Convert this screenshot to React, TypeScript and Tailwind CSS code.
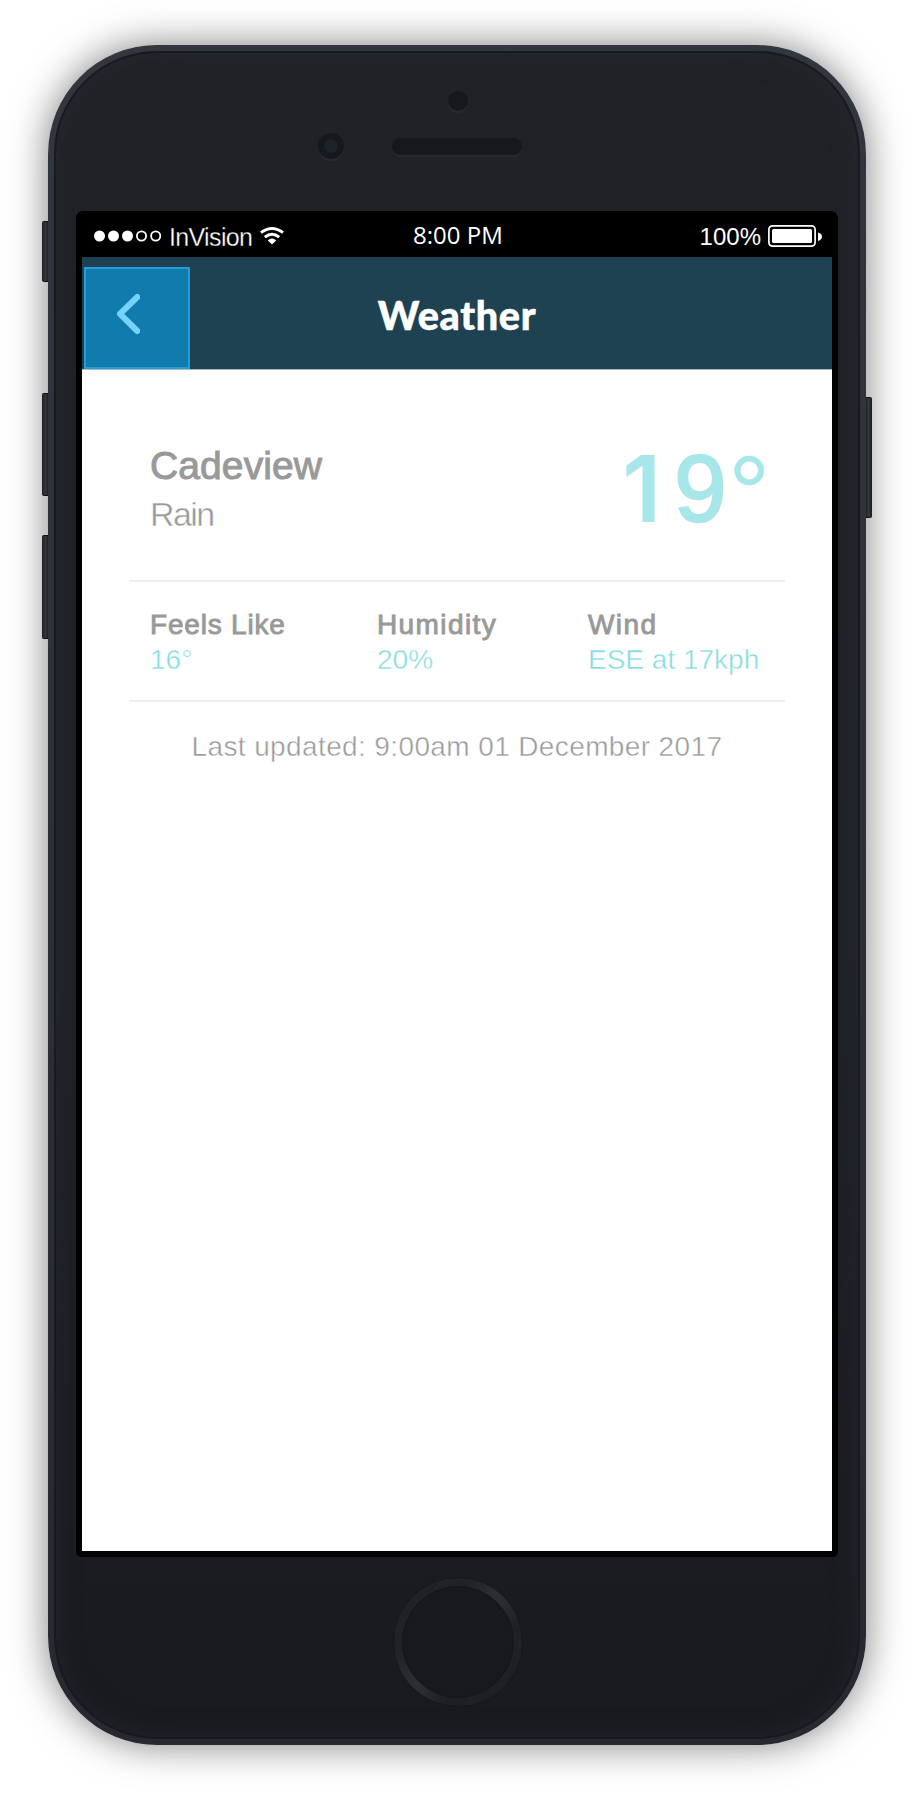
import React from "react";

const thin = "[-webkit-text-stroke:0.45px_#fff]";

function SideButton({ className }: { className: string }) {
  return (
    <div
      className={`absolute w-[7px] border-y border-[#17191d] bg-linear-to-r from-[#25272c] via-[#44474d] to-[#202227] ${className}`}
    />
  );
}

function SignalDots() {
  return (
    <svg width="68" height="12" viewBox="0 0 68 12" className="shrink-0">
      {[5.5, 19.5, 33.5].map((x) => (
        <circle key={x} cx={x} cy="6" r="5.5" fill="#fff" />
      ))}
      {[47.5, 61.7].map((x) => (
        <circle key={x} cx={x} cy="6" r="4.6" fill="none" stroke="#fff" strokeWidth="1.8" />
      ))}
    </svg>
  );
}

function Wifi() {
  return (
    <svg width="24" height="18" viewBox="0 0 24 18" className="shrink-0" fill="none" stroke="#fff" strokeWidth="2.8">
      <path d="M0.9 5.7 Q12 -2.8 23.1 5.7" />
      <path d="M4.8 10.2 Q12 4.2 19.2 10.2" />
      <path d="M7.8 13.4 Q12 9.8 16.2 13.4 L12 17.5Z" fill="#fff" stroke="none" />
    </svg>
  );
}

function Battery() {
  return (
    <svg width="54" height="22" viewBox="0 0 54 22" className="shrink-0">
      <rect x="0.9" y="0.9" width="46.2" height="20.2" rx="3.5" fill="none" stroke="#fff" strokeWidth="1.7" />
      <rect x="4" y="4" width="40" height="14" rx="1.5" fill="#fff" />
      <path d="M50 7.5 Q54 8.5 54 11.5 Q54 14.8 50 16Z" fill="#fff" />
    </svg>
  );
}

function StatusBar() {
  return (
    <div className="flex h-[46px] items-start bg-black text-white">
      <div className="flex w-[330px] items-start pl-[12px] pt-[19px]">
        <SignalDots />
        <span className="-mt-[7px] ml-[7px] text-[25px] leading-[28px] whitespace-nowrap tracking-[-0.65px] [-webkit-text-stroke:0.3px_#000]">
          InVision
        </span>
        <div className="-mt-[3px] ml-[8px]">
          <Wifi />
        </div>
      </div>
      <span className="w-[240px] pt-[10px] pl-px font-['Open_Sans',sans-serif] text-[24px] leading-[28px] font-medium whitespace-nowrap">
        8:00 PM
      </span>
      <div className="flex flex-1 items-start justify-end pr-[10px] pt-[14px]">
        <span className="-mt-[2px] mr-[7px] text-[24px] leading-[28px] whitespace-nowrap">100%</span>
        <Battery />
      </div>
    </div>
  );
}

function Header() {
  return (
    <div className="grid h-[113px] grid-cols-[1fr_auto_1fr] border-b border-[#a9b8c2] bg-[#1f4252] pl-[2px]">
      <button className="mt-[10px] flex h-[102px] w-[106px] border-2 border-[#269dd6] bg-[#107cae]" aria-label="Back">
        <svg width="24" height="42" viewBox="0 0 24 42" fill="none" className="mt-[24px] ml-[30px]">
          <path d="M21.3 4 L4 20.8 L21.3 38" stroke="#78d2ff" strokeWidth="6" strokeLinecap="round" strokeLinejoin="round" />
        </svg>
      </button>
      <h1 className="pt-[34px] pr-[2px] font-['Lato',sans-serif] text-[39.5px] leading-[48px] font-black tracking-[0.7px] text-white [-webkit-text-stroke:0.5px_#fff]">
        Weather
      </h1>
      <div />
    </div>
  );
}

function Stat({ label, value, className }: { label: string; value: string; className: string }) {
  return (
    <div className={`pt-px text-[28px] leading-[35px] whitespace-nowrap ${className}`}>
      <div className="[-webkit-text-stroke:0.9px_#999]">{label}</div>
      <div className={`tracking-normal text-[#82dde1] ${thin}`}>{value}</div>
    </div>
  );
}

function Weather() {
  return (
    <div className="flex h-[1181px] flex-col bg-white px-[47px] text-[#999]">
      <div className="flex h-[210px] justify-between pr-[16px] pl-[21px]">
        <div className="pt-[73px]">
          <div className="text-[39px] leading-[46px] tracking-[0.1px] [-webkit-text-stroke:1px_#999]">Cadeview</div>
          <div className={`mt-[5px] text-[34px] leading-[40px] tracking-[-1.6px] ${thin}`}>Rain</div>
        </div>
        <div className="flex items-start pt-[64px] leading-[110px] text-[#a8e7e9]">
          <span className="mr-[13px] font-['Inter',sans-serif] text-[92px] font-semibold">1</span>
          <span className="mr-[2px] text-[94px] [-webkit-text-stroke:2.4px_#a8e7e9]">9</span>
          <span className="-mr-[1px] pt-[4px] text-[104px] [-webkit-text-stroke:0.4px_#a8e7e9]">°</span>
        </div>
      </div>
      <div className="flex h-[122px] border-y-2 border-[#eee] pt-[24px] pl-[21px]">
        <Stat className="w-[227px] tracking-[0.8px]" label="Feels Like" value="16°" />
        <Stat className="w-[211px] tracking-[1.4px]" label="Humidity" value="20%" />
        <Stat className="tracking-[1.4px]" label="Wind" value="ESE at 17kph" />
      </div>
      <div className={`pt-[28px] text-center text-[28px] leading-[34px] tracking-[0.38px] whitespace-nowrap ${thin}`}>
        Last updated: 9:00am 01 December 2017
      </div>
    </div>
  );
}

export default function App() {
  return (
    <div className="relative h-[1798px] w-[924px] overflow-hidden bg-white pt-[45px] pl-[48px] font-['Liberation_Sans',Arial,sans-serif]">
      <SideButton className="top-[221px] left-[42px] h-[61px] rounded-l-[2px]" />
      <SideButton className="top-[393px] left-[42px] h-[103px] rounded-l-[2px]" />
      <SideButton className="top-[535px] left-[42px] h-[104px] rounded-l-[2px]" />
      <SideButton className="top-[397px] left-[865px] h-[121px] rounded-r-[2px]" />
      <div className="relative h-[1700px] w-[818px] rounded-[109px] bg-linear-to-b from-[#32363e] to-[#262930] p-[6px] shadow-[0_0_38px_rgba(0,0,0,0.5)]">
        <div className="flex h-full flex-col items-center rounded-[103px] border-2 border-[#181a1e] bg-linear-to-b from-[#212226] via-[#202228] to-[#191a1e] shadow-[inset_0_0_24px_rgba(42,47,56,0.55)]">
          <div className="flex h-[158px] w-full flex-col">
            <div className="mt-[38px] ml-[392px] size-5 rounded-full bg-[#17181c] shadow-[0_2px_1px_#2b2c30]" />
            <div className="mt-[22px] ml-[262px] flex items-center">
              <div className="size-[26px] rounded-full border-[6px] border-[#17181c] bg-[#1c212a] shadow-[0_2px_1px_#2b2c30]" />
              <div className="ml-[48px] h-[17px] w-[130px] rounded-full bg-[#15181c] shadow-[0_2px_1px_#292a2e]" />
            </div>
          </div>
          <div className="w-[762px] shrink-0 rounded-t-[7px] rounded-b-[5px] bg-black px-[6px] pb-[6px]">
            <StatusBar />
            <Header />
            <Weather />
          </div>
          <div className="mt-[20px] ml-[2px] flex size-[130px] shrink-0 items-center justify-center rounded-full border border-[#15171a] bg-[conic-gradient(from_0deg,#202226_0deg,#202226_12deg,#2c2f33_38deg,#1f2126_75deg,#1d1f24_190deg,#2c2f33_225deg,#202226_260deg,#202226_360deg)]">
            <div className="size-[112px] rounded-full border border-[#131518] bg-[#18191d]" />
          </div>
        </div>
      </div>
    </div>
  );
}
